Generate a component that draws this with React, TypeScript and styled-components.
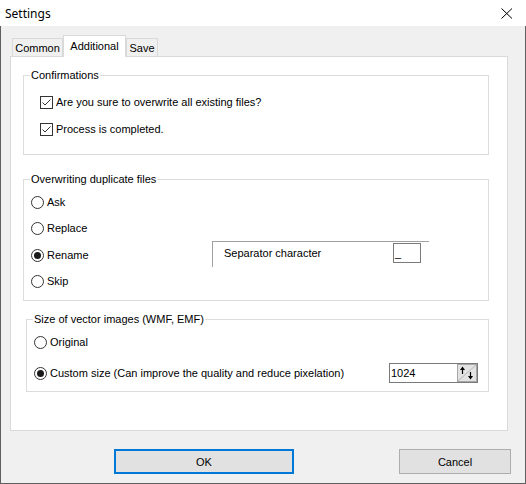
import React from "react";
import styled, { createGlobalStyle } from "styled-components";

const Global = createGlobalStyle`
  html, body { margin: 0; padding: 0; background: #fff; }
  body {
    font-family: "Liberation Sans", Arial, sans-serif;
    font-size: 11px;
    color: #000;
  }
  * { box-sizing: border-box; }
`;

const Window = styled.div`
  width: 526px;
  height: 484px;
  display: flex;
  flex-direction: column;
  background: #fff;
`;

const TitleBar = styled.div`
  height: 26px;
  flex: none;
  display: flex;
  align-items: center;
  justify-content: space-between;
  padding: 0 13px 0 5px;
  font-family: "Noto Sans", "Open Sans", sans-serif;
  font-size: 12px;
  color: #000;
`;

const Body = styled.div`
  flex: 1;
  display: flex;
  flex-direction: column;
  background: #f0f0f0;
  border: 1px solid #5f5f5f;
  border-top: none;
  padding: 9px 17px 9px 9px;
`;

const TabRow = styled.div`
  height: 22px;
  flex: none;
  display: flex;
  align-items: flex-end;
  margin: 0 0 -1px 2px;
  position: relative;
  z-index: 1;
`;

const Tab = styled.div<{ $active?: boolean; $w: number }>`
  width: ${(p) => p.$w}px;
  height: ${(p) => (p.$active ? 22 : 18)}px;
  margin-bottom: ${(p) => (p.$active ? 0 : 1)}px;
  border: 1px solid #d9d9d9;
  border-bottom: none;
  background: ${(p) => (p.$active ? "#fff" : "#f0f0f0")};
  display: flex;
  align-items: center;
  justify-content: center;
  padding-bottom: ${(p) => (p.$active ? 1 : 0)}px;
  white-space: nowrap;
`;

const Panel = styled.div`
  height: 375px;
  flex: none;
  background: #fff;
  border: 1px solid #d9d9d9;
  display: flex;
  flex-direction: column;
  padding: 0 18px 0 12px;
`;

const GroupBox = styled.div<{ $top: number; $h: number; $inset?: number }>`
  position: relative;
  flex: none;
  margin-top: ${(p) => p.$top}px;
  margin-left: ${(p) => p.$inset ?? 0}px;
  height: ${(p) => p.$h}px;
  border: 1px solid #dcdcdc;
  display: flex;
  flex-direction: column;
`;

const GroupTitle = styled.span`
  position: absolute;
  top: -7px;
  left: 6px;
  padding: 0 1px;
  line-height: 13px;
  background: #fff;
  white-space: nowrap;
`;

const Rows = styled.div<{ $pt: number; $pl: number; $gap: number }>`
  display: flex;
  flex-direction: column;
  padding: ${(p) => p.$pt}px 0 0 ${(p) => p.$pl}px;
  gap: ${(p) => p.$gap}px;
`;

const Row = styled.div<{ $between?: boolean }>`
  height: 16px;
  display: flex;
  align-items: center;
  justify-content: ${(p) => (p.$between ? "space-between" : "flex-start")};
  padding-right: ${(p) => (p.$between ? 10 : 0)}px;
  white-space: nowrap;
`;

const Choice = styled.label<{ $w?: number }>`
  display: flex;
  align-items: center;
  gap: 3px;
  flex: none;
  width: ${(p) => (p.$w ? `${p.$w}px` : "auto")};
  line-height: 13px;
`;

const CheckBox = styled.span`
  width: 13px;
  height: 13px;
  flex: none;
  border: 1px solid #333;
  background: #fff;
  display: flex;
  align-items: center;
  justify-content: center;
`;

const RadioCircle = styled.span<{ $on?: boolean }>`
  width: 13px;
  height: 13px;
  flex: none;
  border: 1px solid #333;
  border-radius: 50%;
  background: #fff;
  display: flex;
  align-items: center;
  justify-content: center;
  &::after {
    content: "";
    width: 7px;
    height: 7px;
    border-radius: 50%;
    background: ${(p) => (p.$on ? "#1a1a1a" : "transparent")};
  }
`;

const SepFrame = styled.div`
  width: 217px;
  height: 26px;
  flex: none;
  align-self: flex-start;
  margin-top: -6px;
  border-top: 1px solid #a0a0a0;
  border-left: 1px solid #a0a0a0;
  display: flex;
  align-items: flex-start;
  justify-content: space-between;
  padding: 1px 8px 0 11px;
`;

const SepLabel = styled.span`
  margin-top: 4px;
  line-height: 13px;
`;

const TextBox = styled.div<{ $w: number }>`
  width: ${(p) => p.$w}px;
  height: 20px;
  flex: none;
  border: 1px solid #7a7a7a;
  background: #fff;
  display: flex;
  align-items: center;
  justify-content: space-between;
  padding-left: 1px;
  line-height: 13px;
`;

const ButtonRow = styled.div`
  flex: none;
  display: flex;
  margin: 18px -3px 0 0;
`;

const Button = styled.button<{ $default?: boolean; $w: number; $ml?: string }>`
  width: ${(p) => p.$w}px;
  height: 25px;
  margin-left: ${(p) => p.$ml ?? "0"};
  background: #e1e1e1;
  border: ${(p) => (p.$default ? "2px solid #0078d7" : "1px solid #adadad")};
  font-family: "Liberation Sans", Arial, sans-serif;
  font-size: 11px;
  color: #000;
  padding: 0;
`;

const Check = () => (
  <CheckBox>
    <svg width="11" height="11" viewBox="0 0 11 11">
      <polyline points="1.5,5.5 4,8 9.5,2.5" fill="none" stroke="#333" strokeWidth="1" />
    </svg>
  </CheckBox>
);

const SpinIcon = () => (
  <svg width="20" height="18" viewBox="0 0 20 18">
    <rect x="0.5" y="0.5" width="19" height="17" fill="#e3e3e3" stroke="#a6a6a6" />
    <line x1="1" y1="17" x2="19" y2="1" stroke="#b8b8b8" strokeWidth="1" />
    <line x1="5.5" y1="5" x2="5.5" y2="10" stroke="#000" strokeWidth="1.2" />
    <polygon points="3,6 5.5,2.5 8,6" fill="#000" />
    <line x1="13.5" y1="8" x2="13.5" y2="13" stroke="#000" strokeWidth="1.2" />
    <polygon points="11,12 13.5,15.5 16,12" fill="#000" />
  </svg>
);

export default function App() {
  return (
    <>
      <Global />
      <Window>
        <TitleBar>
          <span>Settings</span>
          <svg width="12" height="11" viewBox="0 0 12 11">
            <line x1="0.5" y1="0.5" x2="11" y2="10.5" stroke="#000" strokeWidth="1" />
            <line x1="11" y1="0.5" x2="0.5" y2="10.5" stroke="#000" strokeWidth="1" />
          </svg>
        </TitleBar>
        <Body>
          <TabRow>
            <Tab $w={51}>Common</Tab>
            <Tab $w={63} $active>
              Additional
            </Tab>
            <Tab $w={32}>Save</Tab>
          </TabRow>
          <Panel>
            <GroupBox $top={18} $h={80}>
              <GroupTitle>Confirmations</GroupTitle>
              <Rows $pt={18} $pl={16} $gap={11}>
                <Row>
                  <Choice>
                    <Check />
                    Are you sure to overwrite all existing files?
                  </Choice>
                </Row>
                <Row>
                  <Choice>
                    <Check />
                    Process is completed.
                  </Choice>
                </Row>
              </Rows>
            </GroupBox>

            <GroupBox $top={24} $h={122}>
              <GroupTitle>Overwriting duplicate files</GroupTitle>
              <Rows $pt={14} $pl={7} $gap={10.67}>
                <Row>
                  <Choice>
                    <RadioCircle />
                    Ask
                  </Choice>
                </Row>
                <Row>
                  <Choice>
                    <RadioCircle />
                    Replace
                  </Choice>
                </Row>
                <Row>
                  <Choice $w={181}>
                    <RadioCircle $on />
                    Rename
                  </Choice>
                  <SepFrame>
                    <SepLabel>Separator character</SepLabel>
                    <TextBox $w={28}>_</TextBox>
                  </SepFrame>
                </Row>
                <Row>
                  <Choice>
                    <RadioCircle />
                    Skip
                  </Choice>
                </Row>
              </Rows>
            </GroupBox>

            <GroupBox $top={18} $h={73} $inset={3}>
              <GroupTitle>Size of vector images (WMF, EMF)</GroupTitle>
              <Rows $pt={14} $pl={7} $gap={15}>
                <Row>
                  <Choice>
                    <RadioCircle />
                    Original
                  </Choice>
                </Row>
                <Row $between>
                  <Choice>
                    <RadioCircle $on />
                    Custom size (Can improve the quality and reduce pixelation)
                  </Choice>
                  <TextBox $w={89}>
                    <span>1024</span>
                    <SpinIcon />
                  </TextBox>
                </Row>
              </Rows>
            </GroupBox>
          </Panel>
          <ButtonRow>
            <Button $default $w={180} $ml="104px">
              OK
            </Button>
            <Button $w={112} $ml="auto">
              Cancel
            </Button>
          </ButtonRow>
        </Body>
      </Window>
    </>
  );
}
